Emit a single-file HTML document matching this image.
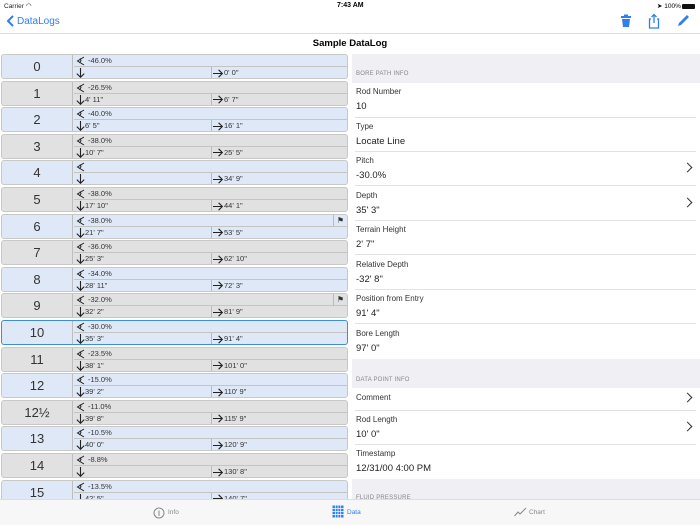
<!DOCTYPE html>
<html><head><meta charset="utf-8"><style>
*{margin:0;padding:0;box-sizing:border-box}
body{width:700px;height:525px;overflow:hidden;background:#fff;font-family:"Liberation Sans",sans-serif;position:relative;color:#000}
.abs{position:absolute}
.row{position:absolute;left:1px;width:347px;height:25px;border:1px solid #c8c8c8;border-radius:3px;overflow:hidden}
.b{background:#dfe8f7}.g{background:#e1e1e1}
.sel{border:1.5px solid #3b8de0}
.num{position:absolute;left:0;top:0;width:71px;height:100%;border-right:1px solid #bdbdbd;text-align:center;font-size:13px;line-height:24px;color:#333}
.top{position:absolute;left:72px;right:0;top:0;height:12px;border-bottom:1px solid #c4c4c4;font-size:7.5px;line-height:12px;padding-left:14px;color:#333}
.bot{position:absolute;left:72px;right:0;top:12px;height:12px;font-size:7.5px;line-height:12px;color:#333}
.bot .d{position:absolute;left:11px}
.bot .r{position:absolute;left:137px;top:0;height:12px;border-left:1px solid #bbb;padding-left:12px}
.ad{position:absolute;left:2px;top:1px;width:9px;height:10px}
.ai{position:absolute;left:1px;top:1.5px;width:10px;height:9px}
.pi{position:absolute;left:2px;top:1px;width:10px;height:10px}
.flag{position:absolute;right:0;top:0;width:14px;height:12px;border-left:1px solid #bbb;font-size:8px;text-align:center;line-height:12px}
.lbl{position:absolute;left:356px;font-size:8px;color:#333}
.val{position:absolute;left:356px;font-size:9.5px;color:#222}
.sep{position:absolute;left:355px;right:4px;height:1px;background:#e2e2e2}
.gray{position:absolute;left:352px;right:0;background:#efeff4}
.sh{position:absolute;left:356px;font-size:6px;color:#888;letter-spacing:.2px}
.chev{position:absolute;left:684px;width:7px;height:7px;border-right:1.3px solid #333;border-top:1.3px solid #333;transform:rotate(45deg)}
</style></head><body>
<svg width="0" height="0" style="position:absolute"><defs>
<symbol id="dn" viewBox="0 0 9 10"><path d="M4.5 0 V9.3 M0.8 5.6 L4.5 9.3 L8.2 5.6" stroke="#222" stroke-width="1.1" fill="none"/></symbol>
<symbol id="rt" viewBox="0 0 10 9"><path d="M0 4.5 H9.3 M5.6 0.8 L9.3 4.5 L5.6 8.2" stroke="#222" stroke-width="1.1" fill="none"/></symbol>
<symbol id="pt" viewBox="0 0 10 10"><path d="M8 1 L1.5 5 L8 9 M4 2.5 L5 4.5 L3.5 7" stroke="#222" stroke-width="1" fill="none"/></symbol>
</defs></svg>
<div class="abs" style="left:4px;top:2px;font-size:6.5px;color:#222">Carrier <span style="font-size:7px">&#x25E0;</span></div>
<div class="abs" style="left:337px;top:2px;font-size:7px;font-weight:bold">7:43 AM</div>
<div class="abs" style="left:657px;top:2px;font-size:6.5px">&#x27A4; 100%</div>
<div class="abs" style="left:682px;top:4px;width:13px;height:5px;background:#111;border-radius:1px"></div>
<svg class="abs" style="left:6px;top:14px" width="10" height="14"><path d="M7 2 L2 7 L7 12" stroke="#2f7ff0" stroke-width="2" fill="none"/></svg>
<div class="abs" style="left:17px;top:16px;font-size:10px;color:#2f7ff0">DataLogs</div>
<svg class="abs" style="left:620px;top:14px" width="12" height="14"><rect x="1" y="2" width="10" height="2" fill="#2f7ff0"/><rect x="4" y="0.5" width="4" height="2" fill="#2f7ff0"/><path d="M2 5 H10 L9 13 H3 Z" fill="#2f7ff0"/></svg>
<svg class="abs" style="left:648px;top:13px" width="12" height="16"><path d="M3 6 H1.5 V15 H10.5 V6 H9" stroke="#2f7ff0" stroke-width="1.3" fill="none"/><path d="M6 10 V1.5 M3.5 4 L6 1.5 L8.5 4" stroke="#2f7ff0" stroke-width="1.3" fill="none"/></svg>
<svg class="abs" style="left:676px;top:14px" width="14" height="14"><path d="M2 12 L3 9 L11 1 L13 3 L5 11 Z" fill="#2f7ff0"/></svg>
<div class="abs" style="left:0;top:33px;width:700px;height:1px;background:#ddd"></div>
<div class="abs" style="left:0;top:38px;width:700px;text-align:center;font-size:9.5px;font-weight:bold">Sample DataLog</div>

<div class="row b" style="top:54px"><div class="num">0</div><div class="top"><svg class="pi"><use href="#pt"/></svg>-46.0%</div><div class="bot"><svg class="ad"><use href="#dn"/></svg><span class="r"><svg class="ai"><use href="#rt"/></svg>0' 0"</span></div></div>
<div class="row g" style="top:80.6px"><div class="num">1</div><div class="top"><svg class="pi"><use href="#pt"/></svg>-26.5%</div><div class="bot"><svg class="ad"><use href="#dn"/></svg><span class="d">4' 11"</span><span class="r"><svg class="ai"><use href="#rt"/></svg>6' 7"</span></div></div>
<div class="row b" style="top:107.2px"><div class="num">2</div><div class="top"><svg class="pi"><use href="#pt"/></svg>-40.0%</div><div class="bot"><svg class="ad"><use href="#dn"/></svg><span class="d">6' 5"</span><span class="r"><svg class="ai"><use href="#rt"/></svg>16' 1"</span></div></div>
<div class="row g" style="top:133.8px"><div class="num">3</div><div class="top"><svg class="pi"><use href="#pt"/></svg>-38.0%</div><div class="bot"><svg class="ad"><use href="#dn"/></svg><span class="d">10' 7"</span><span class="r"><svg class="ai"><use href="#rt"/></svg>25' 5"</span></div></div>
<div class="row b" style="top:160.4px"><div class="num">4</div><div class="top"><svg class="pi"><use href="#pt"/></svg></div><div class="bot"><svg class="ad"><use href="#dn"/></svg><span class="r"><svg class="ai"><use href="#rt"/></svg>34' 9"</span></div></div>
<div class="row g" style="top:187px"><div class="num">5</div><div class="top"><svg class="pi"><use href="#pt"/></svg>-38.0%</div><div class="bot"><svg class="ad"><use href="#dn"/></svg><span class="d">17' 10"</span><span class="r"><svg class="ai"><use href="#rt"/></svg>44' 1"</span></div></div>
<div class="row b" style="top:213.6px"><div class="num">6</div><div class="top"><svg class="pi"><use href="#pt"/></svg>-38.0%<span class="flag">&#x2691;</span></div><div class="bot"><svg class="ad"><use href="#dn"/></svg><span class="d">21' 7"</span><span class="r"><svg class="ai"><use href="#rt"/></svg>53' 5"</span></div></div>
<div class="row g" style="top:240.2px"><div class="num">7</div><div class="top"><svg class="pi"><use href="#pt"/></svg>-36.0%</div><div class="bot"><svg class="ad"><use href="#dn"/></svg><span class="d">25' 3"</span><span class="r"><svg class="ai"><use href="#rt"/></svg>62' 10"</span></div></div>
<div class="row b" style="top:266.8px"><div class="num">8</div><div class="top"><svg class="pi"><use href="#pt"/></svg>-34.0%</div><div class="bot"><svg class="ad"><use href="#dn"/></svg><span class="d">28' 11"</span><span class="r"><svg class="ai"><use href="#rt"/></svg>72' 3"</span></div></div>
<div class="row g" style="top:293.4px"><div class="num">9</div><div class="top"><svg class="pi"><use href="#pt"/></svg>-32.0%<span class="flag">&#x2691;</span></div><div class="bot"><svg class="ad"><use href="#dn"/></svg><span class="d">32' 2"</span><span class="r"><svg class="ai"><use href="#rt"/></svg>81' 9"</span></div></div>
<div class="row b sel" style="top:320px"><div class="num">10</div><div class="top"><svg class="pi"><use href="#pt"/></svg>-30.0%</div><div class="bot"><svg class="ad"><use href="#dn"/></svg><span class="d">35' 3"</span><span class="r"><svg class="ai"><use href="#rt"/></svg>91' 4"</span></div></div>
<div class="row g" style="top:346.6px"><div class="num">11</div><div class="top"><svg class="pi"><use href="#pt"/></svg>-23.5%</div><div class="bot"><svg class="ad"><use href="#dn"/></svg><span class="d">38' 1"</span><span class="r"><svg class="ai"><use href="#rt"/></svg>101' 0"</span></div></div>
<div class="row b" style="top:373.2px"><div class="num">12</div><div class="top"><svg class="pi"><use href="#pt"/></svg>-15.0%</div><div class="bot"><svg class="ad"><use href="#dn"/></svg><span class="d">39' 2"</span><span class="r"><svg class="ai"><use href="#rt"/></svg>110' 9"</span></div></div>
<div class="row g" style="top:399.8px"><div class="num">12½</div><div class="top"><svg class="pi"><use href="#pt"/></svg>-11.0%</div><div class="bot"><svg class="ad"><use href="#dn"/></svg><span class="d">39' 8"</span><span class="r"><svg class="ai"><use href="#rt"/></svg>115' 9"</span></div></div>
<div class="row b" style="top:426.4px"><div class="num">13</div><div class="top"><svg class="pi"><use href="#pt"/></svg>-10.5%</div><div class="bot"><svg class="ad"><use href="#dn"/></svg><span class="d">40' 0"</span><span class="r"><svg class="ai"><use href="#rt"/></svg>120' 9"</span></div></div>
<div class="row g" style="top:453px"><div class="num">14</div><div class="top"><svg class="pi"><use href="#pt"/></svg>-8.8%</div><div class="bot"><svg class="ad"><use href="#dn"/></svg><span class="r"><svg class="ai"><use href="#rt"/></svg>130' 8"</span></div></div>
<div class="row b" style="top:479.6px"><div class="num">15</div><div class="top"><svg class="pi"><use href="#pt"/></svg>-13.5%</div><div class="bot"><svg class="ad"><use href="#dn"/></svg><span class="d">42' 5"</span><span class="r"><svg class="ai"><use href="#rt"/></svg>140' 7"</span></div></div>

<div class="gray" style="top:54px;height:29px"></div>
<div class="sh" style="top:71px">BORE PATH INFO</div>
<div class="lbl" style="top:87px">Rod Number</div><div class="val" style="top:101px">10</div>
<div class="sep" style="top:117px"></div>
<div class="lbl" style="top:122px">Type</div><div class="val" style="top:136px">Locate Line</div>
<div class="sep" style="top:151px"></div>
<div class="lbl" style="top:156px">Pitch</div><div class="val" style="top:170px">-30.0%</div><div class="chev" style="top:164px"></div>
<div class="sep" style="top:185px"></div>
<div class="lbl" style="top:191px">Depth</div><div class="val" style="top:205px">35' 3"</div><div class="chev" style="top:199px"></div>
<div class="sep" style="top:220px"></div>
<div class="lbl" style="top:225px">Terrain Height</div><div class="val" style="top:239px">2' 7"</div>
<div class="sep" style="top:254px"></div>
<div class="lbl" style="top:260px">Relative Depth</div><div class="val" style="top:274px">-32' 8"</div>
<div class="sep" style="top:289px"></div>
<div class="lbl" style="top:294px">Position from Entry</div><div class="val" style="top:308px">91' 4"</div>
<div class="sep" style="top:323px"></div>
<div class="lbl" style="top:329px">Bore Length</div><div class="val" style="top:343px">97' 0"</div>
<div class="gray" style="top:359px;height:29px"></div>
<div class="sh" style="top:377px">DATA POINT INFO</div>
<div class="lbl" style="top:393px">Comment</div><div class="chev" style="top:394px"></div>
<div class="sep" style="top:410px"></div>
<div class="lbl" style="top:415px">Rod Length</div><div class="val" style="top:429px">10' 0"</div><div class="chev" style="top:423px"></div>
<div class="sep" style="top:444px"></div>
<div class="lbl" style="top:449px">Timestamp</div><div class="val" style="top:463px">12/31/00 4:00 PM</div>
<div class="gray" style="top:479px;height:20px"></div>
<div class="sh" style="top:495px">FLUID PRESSURE</div>

<div class="abs" style="left:0;top:499px;width:700px;height:26px;background:#f7f7f7;border-top:1px solid #ddd"></div>
<svg class="abs" style="left:153px;top:507px" width="12" height="12"><circle cx="6" cy="6" r="5" stroke="#888" fill="none"/><line x1="6" y1="3.5" x2="6" y2="9" stroke="#888"/></svg>
<div class="abs" style="left:168px;top:509px;font-size:6.5px;color:#888">Info</div>
<svg class="abs" style="left:332px;top:505px" width="12" height="13"><rect x="0.5" y="0.5" width="11" height="12" fill="#2f7ff0"/><path d="M3.3 0 V13 M6 0 V13 M8.7 0 V13 M0 3.5 H12 M0 6.5 H12 M0 9.5 H12" stroke="#fff" stroke-width="0.7"/></svg>
<div class="abs" style="left:347px;top:509px;font-size:6.5px;color:#2f7ff0">Data</div>
<svg class="abs" style="left:514px;top:507px" width="13" height="10"><path d="M0.5 9 L4 5 L6 7 L12 1" stroke="#888" fill="none"/></svg>
<div class="abs" style="left:529px;top:509px;font-size:6.5px;color:#888">Chart</div>
</body></html>
